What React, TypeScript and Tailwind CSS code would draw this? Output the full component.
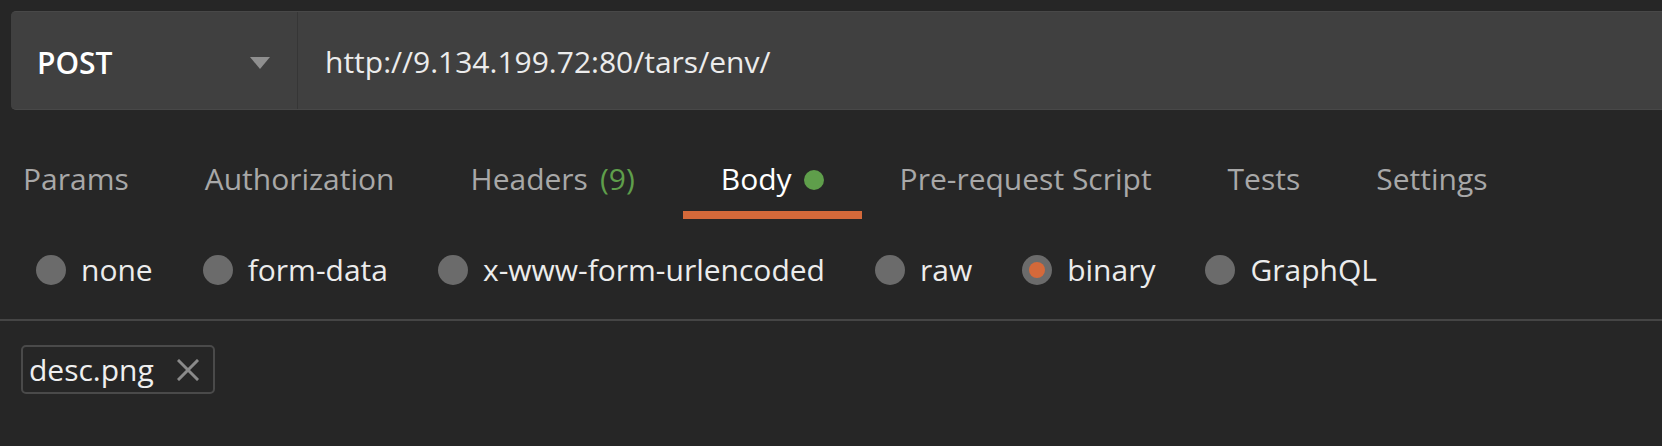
import React from "react";

const tabs = [
  { label: "Params" },
  { label: "Authorization" },
  { label: "Headers", count: "(9)" },
  { label: "Body", active: true, dot: true },
  { label: "Pre-request Script" },
  { label: "Tests" },
  { label: "Settings" },
];

const radios = [
  { label: "none" },
  { label: "form-data" },
  { label: "x-www-form-urlencoded" },
  { label: "raw" },
  { label: "binary", checked: true },
  { label: "GraphQL" },
];

export default function App() {
  return (
    <div
      className="w-full h-[446px] bg-[#262626] overflow-hidden"
      style={{ fontFamily: '"Open Sans", "Noto Sans", sans-serif' }}
    >
      {/* Request bar */}
      <div className="pt-[11px] pl-[11px]">
        <div className="flex h-[99px] bg-[#404040] rounded-l-[5px] border-y border-[#484848]">
          <div className="w-[287px] flex items-center justify-between pl-[26px] pr-[27px] pt-[4px] border-r border-[#363636]">
            <span className="text-[30px] leading-[41px] font-semibold text-white">POST</span>
            <svg width="20" height="12" viewBox="0 0 20 12">
              <polygon points="0,0 20,0 10,12" fill="#8f8f8f" />
            </svg>
          </div>
          <div className="flex items-center pl-[27px] pt-[2px]">
            <span className="text-[30px] leading-[41px] text-[#ececec]">http://9.134.199.72:80/tars/env/</span>
          </div>
        </div>
      </div>

      {/* Tabs */}
      <div className="flex mt-[48px]">
        {tabs.map((t, i) => (
          <div
            key={t.label}
            className={`flex flex-col ${i === 0 ? "pl-[23px]" : "pl-[38px]"} ${t.count ? "pr-[48px]" : "pr-[38px]"}`}
          >
            <div className="flex items-center h-[41px]">
              <span
                className={`text-[30px] leading-[41px] whitespace-nowrap ${t.active ? "text-white" : "text-[#a8a8a8]"}`}
              >
                {t.label}
              </span>
              {t.count && (
                <span className="text-[30px] leading-[41px] text-[#5f9e4b] ml-[12px]">{t.count}</span>
              )}
              {t.dot && <span className="ml-[12px] mt-[2px] w-[20px] h-[20px] rounded-full bg-[#5f9e4b]" />}
            </div>
            <div
              className={`mt-[12px] h-[8px] ${t.active ? "bg-[#d4693a]" : "bg-transparent"} ${i === 0 ? "-ml-[23px]" : "-ml-[38px]"} -mr-[38px]`}
            />
          </div>
        ))}
      </div>

      {/* Radios */}
      <div className="flex items-center mt-[30px] pl-[36px] gap-[50px]">
        {radios.map((r) => (
          <div key={r.label} className="flex items-center gap-[15px]">
            <span className="w-[30px] h-[30px] rounded-full bg-[#6b6b6b] flex items-center justify-center">
              {r.checked && <span className="w-[16px] h-[16px] rounded-full bg-[#d4693a]" />}
            </span>
            <span className="text-[30px] leading-[41px] text-[#ececec] whitespace-nowrap">{r.label}</span>
          </div>
        ))}
      </div>

      {/* Separator */}
      <div className="mt-[29px] h-[2px] bg-[#454545]" />

      {/* File chip */}
      <div className="pl-[21px] mt-[24px]">
        <div className="inline-flex items-center h-[49px] border-2 border-[#4a4a4a] rounded-[5px] pl-[6px] pr-[14px]">
          <span className="text-[30px] leading-[41px] text-[#efefef]">desc.png</span>
          <svg className="ml-[23px]" width="22" height="22" viewBox="0 0 22 22">
            <path d="M2 2 L20 20 M20 2 L2 20" stroke="#8a8a8a" strokeWidth="3" strokeLinecap="square" />
          </svg>
        </div>
      </div>
    </div>
  );
}
